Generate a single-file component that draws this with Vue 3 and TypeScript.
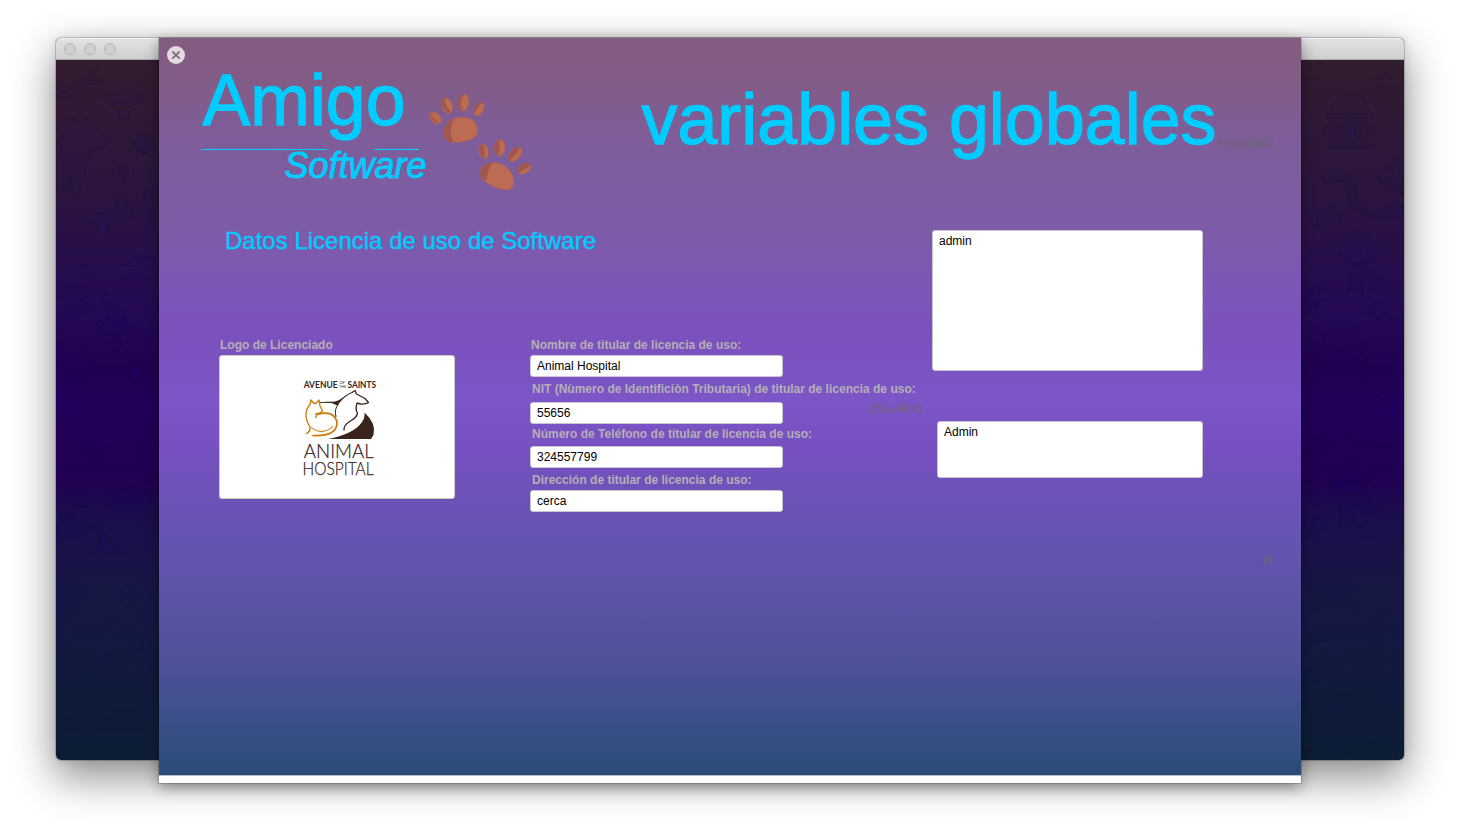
<script setup lang="ts">
interface Field {
  label: string
  value: string
}

const fields: Field[] = [
  { label: 'Nombre de titular de licencia de uso:', value: 'Animal Hospital' },
  { label: 'NIT (Nùmero de Identificiòn Tributaria) de titular de licencia de uso:', value: '55656' },
  { label: 'Número de Teléfono de titular de licencia de uso:', value: '324557799' },
  { label: 'Dirección de titular de licencia de uso:', value: 'cerca' },
]
</script>

<template>
  <div class="desktop">
    <div class="window">
      <div class="titlebar"><i></i><i></i><i></i></div>
      <svg class="backdrop" viewBox="0 0 1348 700" preserveAspectRatio="none">
        <defs>
          <g id="pets-left" fill="#1a15a0" fill-opacity=".07" stroke="#08001c" stroke-opacity=".2" stroke-width="1.2">
            <path d="M0 27q12 10 14-2l8-8 6 3 9-12q4-2 3 5l-3 8 10-4q3 3-4 6l-16 3-9 7q-8 12-18 3" />
            <ellipse cx="67" cy="38" rx="20" ry="9" /><ellipse cx="67" cy="38" rx="15" ry="4" /><circle cx="68" cy="55" r="6" />
            <path d="M10 69q-3-16 4-14l6 6 10-1q4-8 8-2l1 11 13 12q-2 10-17 8l-4 13q-5 25-8 30-5 4-7-3l-2-13-4 14-10 2V82Q6 78 10 69z" />
            <circle cx="65" cy="113" r="8" /><path d="M61 106l8 14M70 106l-3 14" />
            <path d="M36 153q5-3 7 2l18-8q-3-9 4-10 6 0 6 8 8 0 7 7-3 8-11 2l-16 9q3 10-5 10-6-1-5-9-9 1-9-6z" />
            <path d="M90 168q7-6 4-20-10-12-3-19 8-5 12 0 3 9-4 9-5-2-2-6" />
            <path d="M60 217l4-12q18-10 39-4v15q-20 7-43 1zM67 204q10 5 36 0M75 200q2-7 6-1 3-7 7 0 4-5 7 1" />
            <path d="M8 243q3-11 11-9 6 1 8 10-2 6-9 2-8 4-10-3z" /><circle cx="4" cy="235" r="3" /><circle cx="15" cy="228" r="4" /><circle cx="23" cy="228" r="3" />
            <circle cx="27" cy="207" r="3" /><circle cx="33" cy="205" r="3" /><path d="M27 215q6-7 12 1-5 5-12-1z" />
            <path d="M46 237q5-7 6 4l11 9q10 5 5 14-9 6-16-7l-2-10z" />
            <circle cx="89" cy="83" r="10" /><path d="M83 75l-5 10 10 8 7-14z" />
          </g>
          <g id="pets-right" fill="#1a15a0" fill-opacity=".05" stroke="#08001c" stroke-opacity=".22" stroke-width="1.2">
            <path d="M0 15q20-10 19-14M0 19q15 2 23-6" />
            <path d="M28 53q4-19 19-21 18 1 20 21M24 53h47v5H24zM30 58v27h35V58M26 85h43v4H26zM30 63q-8 2-8 7t8 7M65 63q8 2 8 7t-8 7" /><circle cx="48" cy="71" r="11" /><circle cx="48" cy="71" r="6" />
            <path d="M67 21q9-7 14-2l-2-7q7-2 10 8l13-3M68 24q12-1 17 8l4-7 13 6" />
            <path d="M20 119q0-7 13-7 21 1 22 14-5 16 5 22 15 11 24 1 10-8 18-2 2 11-13 11-31 0-40-14-6-10 0-19-8-7-20-3-8 1-9-3z" />
            <path d="M102 93L82 109q-11 12 0 15l20 11M83 113q8-6 8 2-5 6-9 0" />
            <path d="M10 157q4-14 15-5 8 9-3 15-13 3-12-10z" /><circle cx="30" cy="148" r="4" /><circle cx="35" cy="158" r="4" />
            <path d="M36 198l4-5-4-6 6-3 0-7 7 0 4-6 5 4 7-3 2 7 7 1-2 6 6 4-6 5 2 7-8 1-3 6-6-4-7 3-3-6-7 0 1-7zM47 209l-2 25 8-7 8 9-2-23 14 20 3-8h10L70 206" /><circle cx="56" cy="192" r="12" /><path d="M53 190l6-3-1 10" />
            <path d="M0 222q17-4 18 13 0 15-18 20M18 230q10-4 12 3-1 9-13 9" />
          </g>
        </defs>
        <g opacity=".6">
          <use href="#pets-left" /><use href="#pets-left" transform="translate(-8 229)" /><use href="#pets-left" transform="translate(-16 453)" opacity=".5" />
          <use href="#pets-right" transform="translate(1246 0)" /><use href="#pets-right" transform="translate(1238 229)" /><use href="#pets-right" transform="translate(1230 460)" opacity=".4" />
        </g>
      </svg>
    </div>

    <main class="sheet">
      <div class="canvas">
        <button class="close" aria-label="Cerrar">
          <svg viewBox="0 0 18 18"><circle cx="9" cy="9" r="9" fill="#e5dbe4" /><path d="M5.3 5.3l7.4 7.4m0-7.4l-7.4 7.4" stroke="#7c6e7b" stroke-width="1.9" /></svg>
        </button>

        <header>
          <svg class="brand" viewBox="0 0 350 150">
            <text x="82" y="120" textLength="35" class="ghost">LOGO</text>
            <text x="2.5" y="86.5" font-size="72" textLength="203" lengthAdjust="spacingAndGlyphs" class="cyan">Amigo</text>
            <path d="M1 111.5h126M174 111.5h45" stroke="#00ccff" />
            <text x="84.5" y="140" font-size="36" font-style="italic" textLength="142" lengthAdjust="spacingAndGlyphs" class="cyan soft">Software</text>
            <svg x="225" y="47" width="115" height="115" viewBox="0 0 345 345">
              <defs>
                <clipPath id="pad-a"><path d="M57 147C55 120 78 97 109 97c29 0 46 12 49 37 2 24-22 33-55 37-29 5-44-2-46-24z" /></clipPath>
                <clipPath id="pad-b"><path d="M166 262c3-22 25-32 50-28 27 5 50 30 50 53 0 21-7 27-24 27-35-2-79-28-76-52z" /></clipPath>
              </defs>
              <g fill="#bb6c52" stroke="#ad604e" stroke-width="2">
                <path d="M57 147C55 120 78 97 109 97c29 0 46 12 49 37 2 24-22 33-55 37-29 5-44-2-46-24z" />
                <path d="M166 262c3-22 25-32 50-28 27 5 50 30 50 53 0 21-7 27-24 27-35-2-79-28-76-52z" />
                <ellipse cx="31" cy="99" rx="14" ry="21" transform="rotate(-48 31 99)" />
                <ellipse cx="66" cy="62" rx="16" ry="24" transform="rotate(-24 66 62)" />
                <ellipse cx="116" cy="53" rx="16" ry="25" transform="rotate(7 116 53)" />
                <ellipse cx="162" cy="72" rx="13" ry="22" transform="rotate(28 162 72)" />
                <ellipse cx="176" cy="199" rx="14" ry="22" transform="rotate(-13 176 199)" />
                <ellipse cx="224" cy="188" rx="16" ry="25" transform="rotate(3 224 188)" />
                <ellipse cx="271" cy="208" rx="15" ry="25" transform="rotate(40 271 208)" />
                <ellipse cx="298" cy="251" rx="14" ry="21" transform="rotate(62 298 251)" />
              </g>
              <g fill="#a15750">
                <path clip-path="url(#pad-a)" d="M50 90h47c-23 23-25 56-10 84H50z" />
                <path clip-path="url(#pad-b)" d="M160 225h64c-22 4-37 21-38 60h-30z" />
                <path d="M14 85c-2 12 7 25 31 31-10-8-20-16-31-31z" />
                <path d="M53 41c-14 8 0 38 26 42-11-13-20-25-18-42z" />
                <path d="M113 28c-17 11-18 42 0 48-7-16-7-31 2-48z" />
                <path d="M165 51c-15 7-22 23-16 39 4-11 8-26 25-38z" />
                <path d="M173 178c-18 5-12 38 7 41-1-13 1-29-7-41z" />
                <path d="M222 163c-18 8-18 42-1 49 4-15 5-31 1-49z" />
                <path d="M278 187c-20 2-29 20-27 39 12-5 22-20 35-37z" />
                <path d="M300 235c-17 4-22 14-20 26 17-3 31-13 37-23z" />
              </g>
            </svg>
          </svg>
          <svg class="title" viewBox="0 0 650 100">
            <text x="0.5" y="63" font-size="72" textLength="575" lengthAdjust="spacingAndGlyphs" class="cyan">variables globales</text>
            <text x="578.5" y="67" font-size="12" textLength="54" class="ghost">USUARIO</text>
          </svg>
        </header>

        <section class="body">
          <div class="license">
            <h2><svg viewBox="0 0 380 30"><text x="0" y="19" font-size="24" textLength="371" lengthAdjust="spacingAndGlyphs" class="cyan heading">Datos Licencia de uso de Software</text></svg></h2>
            <div class="columns">
              <div class="logo-col">
                <label>Logo de Licenciado</label>
                <div class="logo-box">
                  <svg viewBox="0 0 90 115">
                    <g class="hospital">
                      <text x="8.7" y="17.8" font-size="9" font-weight="bold" textLength="34" lengthAdjust="spacingAndGlyphs">AVENUE</text>
                      <text x="44.5" y="14" font-size="4.5" textLength="5.5" lengthAdjust="spacingAndGlyphs">OF</text>
                      <text x="44" y="18" font-size="4.5" textLength="7" lengthAdjust="spacingAndGlyphs">THE</text>
                      <text x="52.5" y="17.8" font-size="9" font-weight="bold" textLength="28.5" lengthAdjust="spacingAndGlyphs">SAINTS</text>
                      <text x="8.8" y="88" font-size="20" textLength="70" lengthAdjust="spacingAndGlyphs" class="thin">ANIMAL</text>
                      <text x="7.5" y="105" font-size="18.5" textLength="71" lengthAdjust="spacingAndGlyphs" class="thin">HOSPITAL</text>
                    </g>
                    <g fill="none" stroke="#38241a" stroke-linejoin="round">
                      <path d="M24.5 32.5H42" stroke-width=".9" />
                      <path d="M43 33.5Q50 25 57 22.5L60 20.5l1.5 3.5 8.500 4.500 3.500 4q-2.500 2-8 1.500l-4-1" stroke-width="1.3" />
                      <path d="M62 33.500q-2 5 .5 10-1 4-7 7.500-7 4-6.500 9.500" stroke-width="1.300" />
                      <path d="M43.500 34q-4.500 5-2.500 13" stroke-width="1" />
                    </g>
                    <path d="M29 31.800h8q6 0 12-5-5 5-6.500 9-4-3-13.500-4z" fill="#38241a" />
                    <path d="M33 69q26-5 34-17 3-4 2.500-9.500 12 11 9 22.500l-2.500 4z" fill="#38241a" />
                    <g fill="none" stroke="#cb7909" stroke-linecap="round" stroke-linejoin="round">
                      <path d="M11.500 63.500q4-2 3.500-6-8-14 0-23l1-4.500 3 3.500 2.500-.5 2.500-3 1 6 2.500 5-2.500 2-4 1v3.500" stroke-width="1.300" />
                      <path d="M22.500 44.500q16-4.500 19.500 7 1 15-24 14" stroke-width="1.700" />
                      <path d="M16 57.500q11 9 22-1" stroke-width="1" />
                    </g>
                  </svg>
                </div>
              </div>
              <div class="fields">
                <div v-for="(f, i) in fields" :key="f.value" class="field" :class="'field-' + i">
                  <label>{{ f.label }}</label>
                  <div class="input">{{ f.value }}</div>
                </div>
              </div>
            </div>
          </div>
          <aside>
            <div class="area tall">admin</div>
            <span class="ghost user">USUARIO</span>
            <div class="area short">Admin</div>
            <span class="ghost ident">id</span>
          </aside>
        </section>
      </div>
    </main>
  </div>
</template>

<style>
body { background: #fff; overflow: hidden; }
</style>

<style scoped>
.desktop {
  position: relative;
  width: 1460px;
  height: 834px;
  box-sizing: border-box;
  padding: 38px 55px 0;
  overflow: hidden;
  background: #fff;
  font: 12px/14px "Liberation Sans", Arial, sans-serif;
}
.window {
  width: 1348px;
  height: 722px;
  margin-left: 1px;
  border-radius: 5px;
  overflow: hidden;
  background: linear-gradient(#321c2f 22px, #2b153e 150px, #240954 280px, #200052 330px, #21005a 370px, #200052 440px, #1b0e4c 480px, #171744 550px, #131940 610px, #0c1d35 720px);
  box-shadow: 0 0 0 1px #0000002e, 0 16px 42px 2px #00000070, 0 0 12px #0000001a;
}
.titlebar {
  display: flex;
  gap: 8px;
  height: 22px;
  box-sizing: border-box;
  padding: 5px 8px;
  background: linear-gradient(#f3f3f3 0 1px, #e3e3e3 1px, #cecece 21px, #aaa 21px);
}
.titlebar i { width: 12px; height: 12px; box-sizing: border-box; border: 1px solid #b5b5b5; border-radius: 50%; background: #d0d0d0; }
.backdrop { display: block; width: 1348px; height: 700px; }
.sheet {
  position: absolute;
  left: 159px;
  top: 38px;
  width: 1142px;
  height: 745px;
  background: #fff;
  box-shadow: 0 0 0 1px #0000002b, 0 4px 14px #00000066;
}
.canvas {
  height: 738px;
  box-sizing: border-box;
  border-bottom: 1px solid #b8bfca;
  background: linear-gradient(#835c80 0, #825c85 40px, #7e5d98 90px, #7d5ca7 190px, #7c57b6 245px, #7b51bd 300px, #7c56c8 365px, #7650c0 415px, #6c52b7 465px, #6154ad 525px, #54529f 600px, #435091 660px, #304e7e 715px, #2b4b77 737px);
}
.close { position: absolute; left: 8px; top: 8px; width: 18px; height: 18px; padding: 0; border: 0; background: none; }
.close svg { display: block; }
header { display: flex; height: 192px; }
.brand { width: 350px; height: 150px; margin-left: 41px; overflow: visible; }
.title { width: 650px; height: 100px; margin: 43px 0 0 91px; }
.cyan { fill: #00ccff; stroke: #00ccff; stroke-width: 1.3; }
.cyan.soft { stroke-width: .9; }
.cyan.heading { stroke-width: .4; }
.ghost { fill: #6b6672; color: #6b6672; font-size: 12px; }
.body { display: flex; }
.license { width: 773px; }
h2 { height: 108px; margin: 0; padding-left: 66px; font-weight: normal; }
h2 svg { display: block; width: 380px; height: 30px; overflow: visible; }
.columns { display: flex; }
.logo-col { width: 311px; padding-left: 60px; box-sizing: border-box; }
label { display: block; height: 17px; line-height: 14px; padding-left: 1px; font-weight: bold; color: #b5afb5; white-space: nowrap; letter-spacing: .005px; }
.logo-box { display: flex; width: 236px; height: 144px; box-sizing: border-box; border: 1px solid #ccc; border-radius: 3px; background: #fff; padding: 14px 0 0 75px; }
.logo-box svg { width: 90px; height: 115px; overflow: visible; }
.hospital { fill: #38241a; font-family: Lato, sans-serif; }
.thin { font-weight: 300; stroke: #38241a; stroke-width: .25; }
.fields { width: 400px; padding-left: 60px; }
.input { width: 253px; height: 22px; box-sizing: border-box; padding: 3px 6px; border: 1px solid #c9c4d0; border-radius: 3px; background: #fff; color: #000; }
.field-1, .field-3 { padding-top: 5px; }
.field-2 { padding-top: 3px; }
.field-1 label, .field-2 label, .field-3 label { padding-left: 2px; }
.field-1 label { height: 20px; }
.field-2 label { height: 19px; }
.field-3 label { height: 17px; }
aside { width: 369px; display: flex; flex-direction: column; }
.area { box-sizing: border-box; padding: 3px 6px; border: 1px solid #c9c4d0; border-radius: 3px; background: #fff; }
.tall { width: 271px; height: 141px; }
.short { width: 266px; height: 57px; margin: 5px 0 0 5px; }
.user { margin: 31px 0 0 -64px; }
.ident { margin: 75px 0 0 331px; }
</style>
